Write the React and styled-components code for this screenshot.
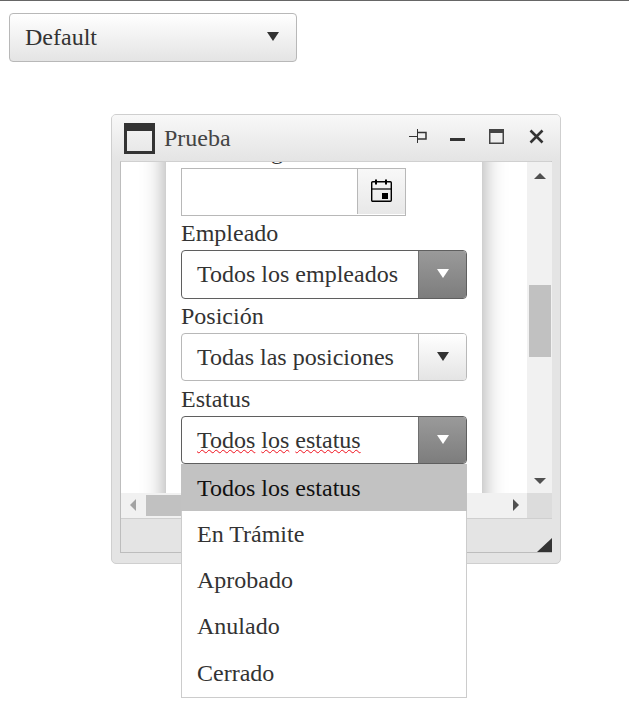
import React from "react";
import styled, { createGlobalStyle } from "styled-components";

const GlobalStyle = createGlobalStyle`
  html, body {
    margin: 0;
    padding: 0;
    background: #fff;
  }
  body {
    font-family: "Liberation Serif", "Times New Roman", serif;
    font-size: 24px;
    color: #333;
  }
`;

const Page = styled.div`
  width: 629px;
  height: 721px;
  box-sizing: border-box;
  border-top: 1px solid #666;
  overflow: hidden;
`;

const Picker = styled.div`
  box-sizing: border-box;
  display: flex;
  width: ${(p) => p.$width}px;
  height: ${(p) => p.$height || 48}px;
  border: 1px solid ${(p) => (p.$active ? "#5f5f5f" : "#b8b8b8")};
  border-radius: 4px;
  background: #fff;
  overflow: hidden;
`;

const PickerValue = styled.div`
  flex: 1;
  padding-left: 15px;
  line-height: 46px;
  white-space: nowrap;
`;

const PickerArrow = styled.div`
  box-sizing: border-box;
  width: 48px;
  display: flex;
  align-items: center;
  justify-content: center;
  padding-bottom: 2px;
  border-left: 1px solid ${(p) => (p.$active ? "#6f6f6f" : "#b8b8b8")};
  background: ${(p) =>
    p.$active
      ? "linear-gradient(#9a9a9a, #7d7d7d)"
      : "linear-gradient(#fff, #e4e4e4)"};
`;

const Triangle = styled.div`
  width: 0;
  height: 0;
  border-left: 6px solid transparent;
  border-right: 6px solid transparent;
  border-top: 9px solid ${(p) => (p.$active ? "#fff" : "#333")};
`;

const TopPicker = styled(Picker)`
  margin: 12px 0 0 9px;
  background: linear-gradient(#fff, #e4e4e4);
`;

const TopArrow = styled(PickerArrow)`
  border-left: 0;
  background: none;
  padding: 0 0 2px 2px;
`;

const Win = styled.div`
  position: relative;
  box-sizing: border-box;
  width: 450px;
  height: 450px;
  margin: 52px 0 0 111px;
  padding: 0 8px 10px;
  border: 1px solid #cfcfcf;
  border-radius: 5px;
  background: #e4e4e4;
`;

const TitleBar = styled.div`
  height: 46px;
  margin: 0 -8px;
  padding: 0 16px 0 12px;
  display: flex;
  align-items: center;
  border-radius: 4px 4px 0 0;
  background: linear-gradient(#f8f8f8, #e4e4e4);
`;

const TitleText = styled.div`
  margin-left: 9px;
  flex: 1;
  line-height: 46px;
  color: #444;
`;

const TitleActions = styled.div`
  display: flex;
  align-items: center;
  gap: 23px;
  margin-bottom: 3px;
`;

const IconSvg = styled.svg`
  display: block;
  flex: none;
`;

const Body = styled.div`
  box-sizing: border-box;
  height: 392px;
  border: 1px solid #bdbdbd;
  border-top-color: #d0d0d0;
  border-right-color: #bdbdbd;
  display: grid;
  grid-template-columns: 406px 25px;
  grid-template-rows: 331px 25px 1fr;
  background: #e4e4e4;
`;

const ScrollView = styled.div`
  overflow: hidden;
  background: #fff;
  padding-left: 45px;
`;

const Panel = styled.div`
  box-sizing: border-box;
  width: 316px;
  height: 460px;
  margin-top: -28px;
  padding: 0 15px;
  background: #fff;
  box-shadow: 0 0 22px rgba(0, 0, 0, 0.38);
`;

const FieldLabel = styled.div`
  height: ${(p) => p.$height || 34}px;
  line-height: ${(p) => (p.$height || 34) + 1 + ((p.$height || 34) - 34)}px;
  white-space: nowrap;
`;

const DateBox = styled.div`
  box-sizing: border-box;
  display: flex;
  width: 225px;
  height: 48px;
  border: 1px solid #b8b8b8;
  background: #fff;
`;

const DateInput = styled.div`
  flex: 1;
`;

const DateButton = styled.div`
  box-sizing: border-box;
  width: 48px;
  height: 45px;
  padding-bottom: 2px;
  display: flex;
  align-items: center;
  justify-content: center;
  border-left: 1px solid #b8b8b8;
  background: linear-gradient(#f8f8f8, #e8e8e8);
`;

const VBar = styled.div`
  position: relative;
  background: #f1f1f1;
  display: flex;
  flex-direction: column;
  align-items: center;
  justify-content: space-between;
  padding: 11px 0 9px;
  border-left: 1px solid #f1f1f1;
`;

const VThumb = styled.div`
  position: absolute;
  top: 123px;
  left: 1px;
  width: 22px;
  height: 72px;
  background: #c1c1c1;
`;

const HBar = styled.div`
  position: relative;
  background: #f1f1f1;
  display: flex;
  align-items: center;
  justify-content: space-between;
  padding: 0 8px 2px 9px;
`;

const HThumb = styled.div`
  position: absolute;
  top: 2px;
  left: 25px;
  width: 200px;
  height: 21px;
  background: #c1c1c1;
`;

const Arrow = styled.div`
  width: 0;
  height: 0;
  border-style: solid;
  border-color: transparent;
  ${(p) => p.$dir === "up" && "border-width: 0 6px 6px; border-bottom-color: #505050;"}
  ${(p) => p.$dir === "down" && "border-width: 6px 6px 0; border-top-color: #505050;"}
  ${(p) => p.$dir === "left" && "border-width: 6px 6px 6px 0; border-right-color: #a3a3a3;"}
  ${(p) => p.$dir === "right" && "border-width: 6px 0 6px 6px; border-left-color: #505050;"}
`;

const Corner = styled.div`
  background: #dcdcdc;
`;

const StatusBar = styled.div`
  grid-column: 1 / 3;
  position: relative;
  border-top: 1px solid #cfcfcf;
  background: #e4e4e4;
`;

const Resizer = styled.div`
  position: absolute;
  right: 0;
  bottom: 0;
  width: 0;
  height: 0;
  border-style: solid;
  border-width: 0 0 14px 15px;
  border-color: transparent transparent #333 transparent;
`;

const Popup = styled.ul`
  position: absolute;
  left: 69px;
  top: 349px;
  box-sizing: border-box;
  width: 286px;
  height: 234px;
  margin: 0;
  padding: 0;
  list-style: none;
  background: #fff;
  border: 1px solid #ccc;
  border-top: 0;
`;

const PopupItem = styled.li`
  height: 46.2px;
  line-height: 46px;
  padding-left: 15px;
  white-space: nowrap;
  ${(p) =>
    p.$selected
      ? "height: 47px; line-height: 48px; margin: 0 -1px; background: #c2c2c2; color: #111; padding-left: 16px;"
      : ""}
`;

const Misspelled = styled.span`
  text-decoration: underline wavy #f0101c 1.2px;
  text-underline-offset: 1px;
`;

const WindowIcon = ({ size, top, side, color }) => (
  <IconSvg width={size} height={size} viewBox={`0 0 ${size} ${size}`}>
    <rect x="0" y="0" width={size} height={top} fill={color} />
    <rect
      x={side / 2}
      y={side / 2}
      width={size - side}
      height={size - side}
      fill="none"
      stroke={color}
      strokeWidth={side}
    />
  </IconSvg>
);

const PinIcon = () => (
  <IconSvg width="18" height="15" viewBox="0 0 18 15">
    <path d="M0 7.5h8M8.5 0v14" stroke="#333" strokeWidth="1" fill="none" />
    <path d="M8.5 3.5h8.5v6.5h-8.5" stroke="#333" strokeWidth="1.5" fill="none" />
  </IconSvg>
);

const MinimizeIcon = () => (
  <IconSvg width="16" height="15" viewBox="0 0 16 15">
    <rect x="0" y="9" width="15" height="3" fill="#333" />
  </IconSvg>
);

const CloseIcon = () => (
  <IconSvg width="17" height="15" viewBox="0 0 17 15">
    <path d="M3.5 1.5l12 12M15.5 1.5l-12 12" stroke="#333" strokeWidth="2.6" fill="none" />
  </IconSvg>
);

const CalendarIcon = () => (
  <IconSvg width="21" height="23" viewBox="0 0 21 23">
    <rect x="0.7" y="2.7" width="19.6" height="19.6" fill="none" stroke="#000" strokeWidth="1.4" rx="1" />
    <path d="M0.7 10h19.6" stroke="#000" strokeWidth="1.2" />
    <path d="M5 0.5v5M15 0.5v5" stroke="#000" strokeWidth="2" />
    <rect x="11" y="14" width="6" height="6" fill="#000" />
  </IconSvg>
);

const Select = ({ value, active, children }) => (
  <Picker $width={286} $height={active === "tall" ? 49 : 48} $active={!!active}>
    <PickerValue>{children || value}</PickerValue>
    <PickerArrow $active={!!active}>
      <Triangle $active={!!active} />
    </PickerArrow>
  </Picker>
);

const statusOptions = [
  "Todos los estatus",
  "En Trámite",
  "Aprobado",
  "Anulado",
  "Cerrado",
];

export default function App() {
  return (
    <Page>
      <GlobalStyle />
      <TopPicker $width={288} $height={49}>
        <PickerValue>Default</PickerValue>
        <TopArrow>
          <Triangle />
        </TopArrow>
      </TopPicker>

      <Win>
        <TitleBar>
          <WindowIcon size={31} top={8} side={3} color="#333" />
          <TitleText>Prueba</TitleText>
          <TitleActions>
            <PinIcon />
            <MinimizeIcon />
            <WindowIcon size={15} top={4} side={1.5} color="#444" />
            <CloseIcon />
          </TitleActions>
        </TitleBar>
        <Body>
          <ScrollView>
            <Panel>
              <FieldLabel>Fecha Registro</FieldLabel>
              <DateBox>
                <DateInput />
                <DateButton>
                  <CalendarIcon />
                </DateButton>
              </DateBox>
              <FieldLabel>Empleado</FieldLabel>
              <Select value="Todos los empleados" active="tall" />
              <FieldLabel>Posición</FieldLabel>
              <Select value="Todas las posiciones" />
              <FieldLabel $height={35}>Estatus</FieldLabel>
              <Select active="on">
                <Misspelled>Todos</Misspelled> <Misspelled>los</Misspelled>{" "}
                <Misspelled>estatus</Misspelled>
              </Select>
            </Panel>
          </ScrollView>
          <VBar>
            <VThumb />
            <Arrow $dir="up" />
            <Arrow $dir="down" />
          </VBar>
          <HBar>
            <HThumb />
            <Arrow $dir="left" />
            <Arrow $dir="right" />
          </HBar>
          <Corner />
          <StatusBar>
            <Resizer />
          </StatusBar>
        </Body>
        <Popup>
          {statusOptions.map((option, i) => (
            <PopupItem key={option} $selected={i === 0}>
              {option}
            </PopupItem>
          ))}
        </Popup>
      </Win>
    </Page>
  );
}
